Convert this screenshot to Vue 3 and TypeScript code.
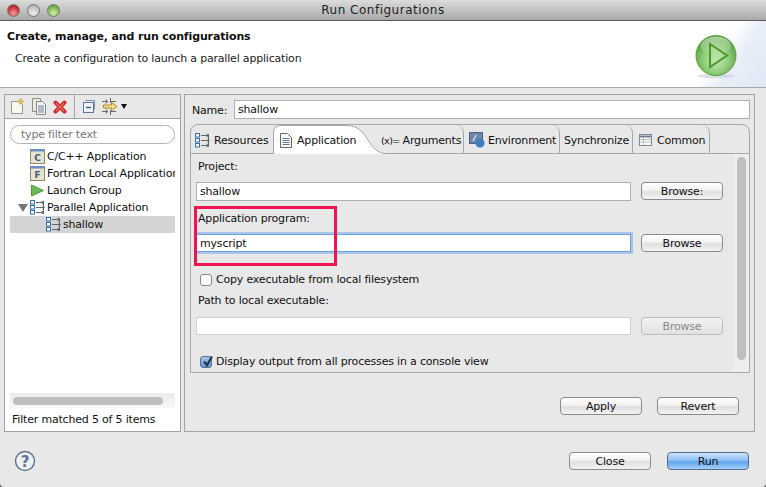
<script setup lang="ts">
const treeItems = [
  { label: 'C/C++ Application', icon: 'c' },
  { label: 'Fortran Local Application', icon: 'f' },
  { label: 'Launch Group', icon: 'run' },
  { label: 'Parallel Application', icon: 'par', open: true },
  { label: 'shallow', icon: 'par', child: true, selected: true },
]
</script>

<template>
  <div class="window">
    <div class="titlebar">
      <div class="lights">
        <span class="light red"></span>
        <span class="light grey"></span>
        <span class="light green"></span>
      </div>
      <span class="title">Run Configurations</span>
    </div>

    <div class="header">
      <div class="header-text">
        <div class="h-title">Create, manage, and run configurations</div>
        <div class="h-sub">Create a configuration to launch a parallel application</div>
      </div>
      <svg class="play" width="42" height="44" viewBox="0 0 42 44">
        <defs>
          <radialGradient id="ball" cx="50%" cy="62%" r="60%">
            <stop offset="0" stop-color="#cdeabb" />
            <stop offset="0.55" stop-color="#8ccb78" />
            <stop offset="1" stop-color="#4f9f3c" />
          </radialGradient>
          <linearGradient id="gloss" x1="0" y1="0" x2="0" y2="1">
            <stop offset="0" stop-color="#fff" stop-opacity="0.5" />
            <stop offset="1" stop-color="#fff" stop-opacity="0.05" />
          </linearGradient>
        </defs>
        <ellipse cx="21" cy="41" rx="19" ry="2" fill="#b9c3cf" opacity="0.5" />
        <circle cx="21" cy="20.5" r="20" fill="url(#ball)" stroke="#5f9e3a" />
        <ellipse cx="21" cy="11" rx="15" ry="9.5" fill="url(#gloss)" />
        <path d="M15 9 L32 20.5 L15 32 Z" fill="#b5e0a0" fill-opacity="0.55" stroke="#4c9a2c" stroke-width="2" />
      </svg>
    </div>

    <div class="main">
      <section class="left panel">
        <div class="toolbar">
          <div class="tool-group first">
            <svg width="15" height="17" viewBox="0 0 15 17">
              <path d="M1.500 3.500h8l3 3v9h-11z" fill="#f8f8ee" stroke="#9a9a88" />
              <path d="M10.500 0.500l1 2 2 1-2 1-1 2-1-2-2-1 2-1z" fill="#f3cf55" stroke="#b58f20" stroke-width="0.700" />
            </svg>
            <svg width="16" height="17" viewBox="0 0 16 17">
              <path d="M1.500 0.500h8v13h-8z" fill="#eceadd" stroke="#8f8f80" />
              <path d="M5.500 3.500h6l3 3v10h-9z" fill="#f6f6ef" stroke="#7d8796" />
              <path d="M7 8h6M7 10h6M7 12h6M7 14h6" stroke="#6d7f9a" />
            </svg>
            <svg width="14" height="14" viewBox="0 0 14 14">
              <path d="M2.500 2.500 L11.500 11.500 M11.500 2.500 L2.500 11.500" stroke="#cf2b2b" stroke-width="4" stroke-linecap="round" />
              <path d="M3 3 L11 11 M11 3 L3 11" stroke="#ec6a5e" stroke-width="1.200" />
            </svg>
          </div>
          <div class="tool-group second">
            <svg width="14" height="15" viewBox="0 0 14 15">
              <path d="M3.500 1.500h9v9" fill="none" stroke="#7e90ad" />
              <rect x="1.500" y="3.500" width="10" height="10" fill="#eef2f8" stroke="#5f7598" />
              <path d="M4 8.500h5" stroke="#384f76" stroke-width="1.300" />
            </svg>
            <svg width="16" height="17" viewBox="0 0 16 17">
              <path d="M0 3.500h5M0 13.500h5" stroke="#666" />
              <path d="M3.500 1.500l2.500 2-2.500 2M3.500 11.500l2.500 2-2.500 2" fill="none" stroke="#666" />
              <path d="M8.500 0v5M8.500 12v5M9 3.500h5M9 13.500h5" stroke="#666" />
              <path d="M1.500 7h8V4.500l5.500 4-5.500 4V10h-8z" fill="#f3dc8e" stroke="#b38a2a" />
            </svg>
            <span class="caret"></span>
          </div>
        </div>
        <div class="left-body">
          <div class="filter">type filter text</div>
          <ul class="tree">
            <li v-for="item in treeItems" :key="item.label" class="row" :class="{ selected: item.selected, child: item.child }">
              <span class="twisty" :class="{ on: item.open }"></span>
              <svg v-if="item.icon === 'c' || item.icon === 'f'" width="16" height="15" viewBox="0 0 16 15">
                <rect x="0.500" y="0.500" width="14" height="14" fill="#e6e4cf" stroke="#94876b" />
                <rect x="0" y="0" width="15" height="2.500" fill="#6f8fc4" />
                <text x="7.500" y="12" text-anchor="middle" class="ic-letter">{{ item.icon === 'c' ? 'C' : 'F' }}</text>
              </svg>
              <svg v-else-if="item.icon === 'run'" width="16" height="15" viewBox="0 0 16 15">
                <path d="M1.500 2 L13.500 7.500 L1.500 13 Z" fill="#6dbb55" stroke="#4f9a3a" />
              </svg>
              <svg v-else width="16" height="15" viewBox="0 0 16 15">
                <rect x="0.500" y="0.500" width="4" height="3.500" fill="#fff" stroke="#2d72b8" />
                <rect x="0.500" y="5.500" width="4" height="3.500" fill="#fff" stroke="#2d72b8" />
                <rect x="0.500" y="10.500" width="4" height="3.500" fill="#fff" stroke="#2d72b8" />
                <path d="M6 2.500h7M6 7.500h8M6 12.500h7M13.500 1v13" stroke="#5a6672" fill="none" />
                <path d="M11.500 1l2 1.500-2 1.500M12.500 6l2 1.500-2 1.500M11.500 11l2 1.500-2 1.500" stroke="#5a6672" fill="none" />
              </svg>
              <span class="row-label">{{ item.label }}</span>
            </li>
          </ul>
          <div class="hscroll"><div class="hthumb"></div></div>
          <div class="matched">Filter matched 5 of 5 items</div>
        </div>
      </section>

      <section class="right panel">
        <div class="name-row">
          <label class="name-label">Name:</label>
          <div class="input name-input">shallow</div>
        </div>
        <div class="folder">
          <div class="tabs">
            <div class="tab tab-res">
              <svg width="16" height="15" viewBox="0 0 16 15">
                <rect x="0.500" y="0.500" width="4" height="3.500" fill="#fff" stroke="#2d72b8" />
                <rect x="0.500" y="5.500" width="4" height="3.500" fill="#fff" stroke="#2d72b8" />
                <rect x="0.500" y="10.500" width="4" height="3.500" fill="#fff" stroke="#2d72b8" />
                <path d="M6 2.500h7M6 7.500h8M6 12.500h7M13.500 1v13" stroke="#5a6672" fill="none" />
                <path d="M11.500 1l2 1.500-2 1.500M12.500 6l2 1.500-2 1.500M11.500 11l2 1.500-2 1.500" stroke="#5a6672" fill="none" />
              </svg>
              Resources
            </div>
            <div class="tab tab-app">
              <svg class="tail" width="113" height="30" viewBox="0 0 113 30">
                <path d="M0.500 30V8Q0.500 1.500 8 1.500H73C85 1.500 90 8 95 16C100 24 105 29.500 113 29.500V30Z" fill="#fff" />
                <path d="M0.500 30V8Q0.500 1.500 8 1.500H73C85 1.500 90 8 95 16C100 24 105 29.500 113 29.500" fill="none" stroke="#a8a8a8" />
              </svg>
              <svg class="doc" width="12" height="15" viewBox="0 0 12 15">
                <path d="M0.500 0.500h7l4 4v10h-11z" fill="#fbfbf6" stroke="#666" />
                <path d="M2.500 5.500h7M2.500 7.500h7M2.500 9.500h7M2.500 11.500h7" stroke="#58789c" />
              </svg>
              <span class="app-label">Application</span>
            </div>
            <div class="tab tab-args"><span class="xeq">(x)=</span> Arguments</div>
            <div class="tab tab-env">
              <svg width="16" height="16" viewBox="0 0 16 16">
                <rect x="0.500" y="0.500" width="13" height="11" fill="#7186a8" stroke="#4a5f84" />
                <path d="M4 9L7 3" stroke="#fff" />
                <ellipse cx="11" cy="11" rx="4.500" ry="4.500" fill="#3c7cc0" />
              </svg>
              Environment
            </div>
            <div class="tab tab-sync">Synchronize</div>
            <div class="tab tab-common">
              <svg width="13" height="12" viewBox="0 0 13 12">
                <rect x="0.500" y="0.500" width="12" height="11" fill="#fcfcf4" stroke="#7f8b9f" />
                <path d="M1 2.500h11" stroke="#6f7f9a" stroke-width="2" />
                <path d="M1 5.500h11M1 8h11M4.500 4v7" stroke="#b4bccb" />
              </svg>
              Common
            </div>
          </div>
          <div class="tab-body">
            <div class="form">
              <div class="lbl project-lbl">Project:</div>
              <div class="field">
                <div class="input long">shallow</div>
                <button class="btn">Browse:</button>
              </div>
              <div class="lbl app-lbl">Application program:</div>
              <div class="field">
                <div class="input long focused">myscript</div>
                <button class="btn">Browse</button>
              </div>
              <div class="check-row first-check">
                <span class="check"></span>
                <span>Copy executable from local filesystem</span>
              </div>
              <div class="lbl path-lbl">Path to local executable:</div>
              <div class="field">
                <div class="input long disabled"></div>
                <button class="btn dis">Browse</button>
              </div>
              <div class="check-row second-check">
                <span class="check on">
                  <svg width="13" height="13" viewBox="0 0 13 13">
                    <path d="M3 6.500L6 10L11 1.500" fill="none" stroke="#23324f" stroke-width="2.200" />
                  </svg>
                </span>
                <span>Display output from all processes in a console view</span>
              </div>
            </div>
            <div class="vtrack"><div class="vthumb"></div></div>
          </div>
        </div>
        <div class="apply-row">
          <button class="btn">Apply</button>
          <button class="btn">Revert</button>
        </div>
      </section>
    </div>

    <div class="footer">
      <svg class="help" width="22" height="22" viewBox="0 0 22 22">
        <circle cx="11" cy="11" r="9.500" fill="#eef0f4" stroke="#5e7190" stroke-width="1.400" />
        <text x="11" y="16.500" text-anchor="middle" class="q">?</text>
      </svg>
      <div class="footer-btns">
        <button class="btn">Close</button>
        <button class="btn primary">Run</button>
      </div>
    </div>

    <div class="callout"></div>
  </div>
</template>

<style>
html, body { margin: 0; padding: 0; background: #555; }
</style>

<style scoped>
.window {
  position: relative;
  width: 766px;
  height: 487px;
  overflow: hidden;
  display: flex;
  flex-direction: column;
  background: #e8e8e8;
  border-radius: 0 0 4px 4px;
  font-family: "DejaVu Sans", sans-serif;
  font-size: 11px;
  letter-spacing: -0.19px;
  color: #111;
}
.titlebar {
  height: 20px;
  flex: none;
  display: flex;
  align-items: center;
  justify-content: center;
  position: relative;
  background: linear-gradient(#dcdcdc, #a9a9a9);
  border-bottom: 1px solid #5c5c5c;
}
.lights { position: absolute; left: 7px; top: 4px; display: flex; gap: 7px; }
.light { width: 13px; height: 13px; border-radius: 50%; box-sizing: border-box; border: 1px solid #777; }
.red { background: radial-gradient(circle at 50% 75%, #f9a0a0, #c62a30 65%, #8e1c20); }
.grey { background: radial-gradient(circle at 50% 75%, #f0f0f0, #bdbdbd 70%, #999); }
.green { background: radial-gradient(circle at 50% 75%, #d4f0a4, #78b44a 65%, #4e8a2c); }
.title { font-size: 12px; color: #222; letter-spacing: 0.5px; }

.header {
  height: 67px;
  flex: none;
  box-sizing: border-box;
  display: flex;
  justify-content: space-between;
  background: linear-gradient(125deg, #fff 91%, #e9eff8 94%, #dfe7f5 100%);
  border-bottom: 1px solid #a9a9a9;
  padding: 8px 29px 0 7px;
}
.h-title { font-weight: 700; font-size: 11px; line-height: 16px; color: #111; letter-spacing: -0.13px; }
.h-sub { font-size: 11px; margin: 7px 0 0 8px; line-height: 14px; color: #222; }
.play { margin-top: 6px; }

.main { flex: none; display: flex; gap: 3px; padding: 6px 0 0 4px; }
.panel { box-sizing: border-box; height: 338px; border: 1px solid #a4a4a4; flex: none; }

.left { width: 177px; display: flex; flex-direction: column; }
.toolbar { height: 23px; flex: none; display: flex; background: #e8e8e8; border-bottom: 1px solid #a4a4a4; }
.tool-group { display: flex; align-items: center; gap: 6px; }
.tool-group svg { flex: none; }
.tool-group.first { width: 70px; box-sizing: border-box; border-right: 1px solid #a4a4a4; padding-left: 5px; }
.tool-group.second { padding-left: 7px; }
.caret { width: 0; height: 0; margin-left: -3px; border-left: 3px solid transparent; border-right: 3px solid transparent; border-top: 5px solid #111; }
.left-body { flex: 1; background: #fff; display: flex; flex-direction: column; padding: 6px 5px 0; min-height: 0; }
.filter {
  height: 19px;
  box-sizing: border-box;
  border: 1px solid #b4b4b4;
  border-radius: 10px;
  padding-left: 10px;
  line-height: 17px;
  color: #777;
  flex: none;
}
.tree { list-style: none; margin: 4px 0 0; padding: 0; height: 245px; flex: none; }
.row { height: 17px; display: flex; align-items: center; white-space: nowrap; overflow: hidden; padding-left: 8px; }
.row svg { flex: none; margin-right: 1px; }
.twisty { width: 12px; height: 7px; flex: none; }
.twisty.on { border-left: 5px solid transparent; border-right: 5px solid transparent; border-top: 8px solid #777; width: 0; height: 0; margin-right: 2px; }
.child { padding-left: 24px; }
.selected { background: #d4d4d4; }
.ic-letter { font: 700 9px "DejaVu Sans", sans-serif; fill: #3b5a8c; }
.hscroll { height: 15px; flex: none; background: linear-gradient(#ececec, #f8f8f8); padding: 4px 12px 0 3px; box-sizing: border-box; }
.hthumb { height: 8px; background: #bfbfbf; border-radius: 4px; width: 150px; }
.matched { margin: 5px 0 0 2px; line-height: 14px; }

.right { width: 571px; display: flex; flex-direction: column; }
.name-row { display: flex; align-items: center; height: 19px; margin-top: 5px; padding-left: 7px; }
.name-label { width: 42px; flex: none; padding-top: 1px; }
.input { box-sizing: border-box; background: #fff; border: 1px solid #b0b0b0; padding-left: 3px; line-height: 18px; }
.name-input { width: 516px; height: 19px; }

.folder {
  margin: 5px 4px 0 5px;
  height: 249px;
  box-sizing: border-box;
  border: 1px solid #a8a8a8;
  border-radius: 8px 8px 0 0;
  display: flex;
  flex-direction: column;
}
.tabs { height: 29px; flex: none; display: flex; box-sizing: border-box; border-bottom: 1px solid #a8a8a8; }
.tab { height: 28px; box-sizing: border-box; display: flex; align-items: center; gap: 3px; white-space: nowrap; border-right: 1px solid #a8a8a8; border-top-right-radius: 8px; flex: none; padding-top: 2px; }
.tab svg { flex: none; }
.tab-res { width: 82px; padding-left: 4px; border-right: none; }
.tab-app { width: 113px; height: 29px; margin-right: -8px; padding-left: 7px; border: none; border-radius: 0; gap: 5px; position: relative; isolation: isolate; }
.tail { position: absolute; left: 0; top: -1px; z-index: -1; }
.tab-args { width: 86px; padding-left: 3px; }
.xeq { font-size: 9.5px; letter-spacing: -0.6px; }
.tab-env { width: 96px; padding-left: 5px; }
.tab-sync { width: 73px; padding-left: 4px; }
.tab-common { width: 77px; padding-left: 6px; gap: 5px; }

.tab-body { flex: 1; display: flex; min-height: 0; }
.form { flex: 1; padding-left: 5px; min-width: 0; }
.lbl { line-height: 14px; padding-left: 2px; }
.project-lbl { margin-top: 6px; margin-bottom: 8px; }
.app-lbl { margin-top: 11px; margin-bottom: 8px; }
.path-lbl { margin-top: 7px; margin-bottom: 9px; }
.field { display: flex; align-items: flex-start; gap: 10px; }
.long { width: 435px; height: 19px; }
.focused { height: 18px; border-color: #6f9fd8; box-shadow: 0 0 0 2px #a9c5e8; line-height: 17px; }
.disabled { border-color: #d0d0d0; height: 18px; }
.btn {
  box-sizing: border-box;
  width: 82px;
  height: 18px;
  margin: 0;
  padding: 0;
  border: 1px solid #8c8c8c;
  border-radius: 4px;
  background: linear-gradient(#fff, #f2f2f2 45%, #dfdfdf 55%, #f3f3f3);
  font: 11px "DejaVu Sans", sans-serif;
  letter-spacing: -0.19px;
  color: #111;
  flex: none;
}
.btn.dis { color: #888; border-color: #bcbcbc; background: linear-gradient(#f2f2f2, #e2e2e2); }
.check-row { display: flex; align-items: center; gap: 4px; padding-left: 4px; line-height: 14px; }
.first-check { margin-top: 21px; }
.second-check { margin-top: 20px; }
.check { width: 12px; height: 12px; box-sizing: border-box; border: 1px solid #8a8a8a; border-radius: 3px; background: linear-gradient(#f6f6f6, #fff); flex: none; position: relative; }
.check.on { background: linear-gradient(#a9c8ea, #5d93d4); border-color: #5a6d8c; }
.check.on svg { position: absolute; left: 0; top: -2px; }
.vtrack { width: 15px; flex: none; background: #eeeeee; padding: 3px 3px 0; box-sizing: border-box; }
.vthumb { width: 9px; height: 203px; background: #bfbfbf; border-radius: 5px; }

.apply-row { display: flex; gap: 15px; padding-left: 375px; margin-top: 24px; }

.footer { flex: 1; display: flex; justify-content: space-between; padding: 18px 17px 0 14px; }
.q { font: 700 15px "DejaVu Sans", sans-serif; fill: #5e7190; }
.footer-btns { display: flex; gap: 16px; padding-top: 2px; }
.btn.primary { background: linear-gradient(#cfe4fb, #8ec0f5 45%, #62a4ee 55%, #a3d2fb); border-color: #55688e; }

.callout {
  position: absolute;
  left: 194px;
  top: 206px;
  width: 143px;
  height: 60px;
  box-sizing: border-box;
  border: 3px solid #ee1650;
  pointer-events: none;
}
</style>
